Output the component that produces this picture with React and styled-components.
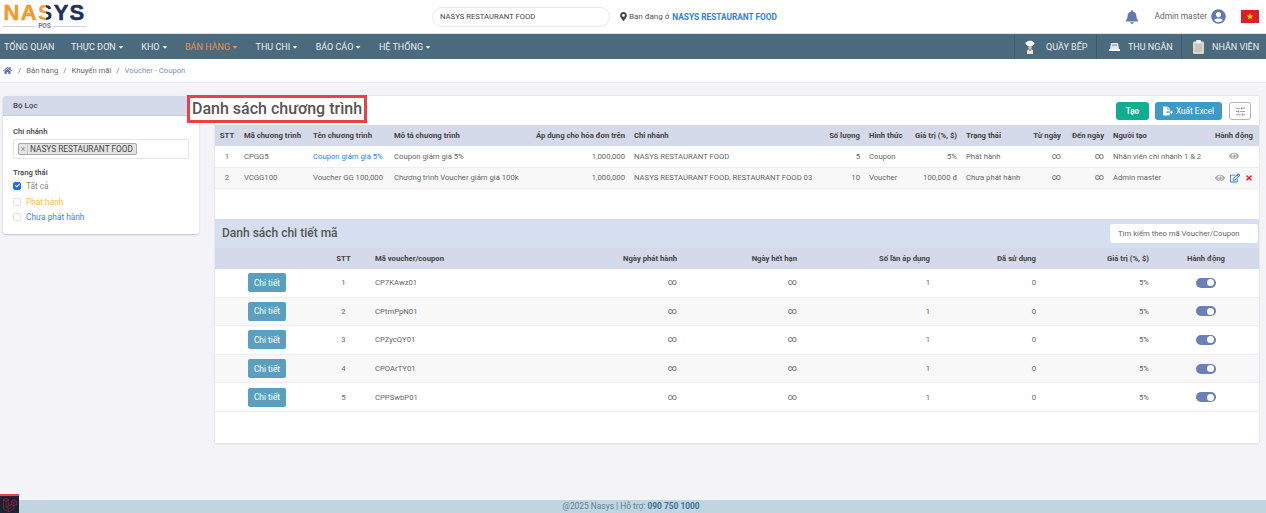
import React from 'react';
import styled, { createGlobalStyle } from 'styled-components';
import { FaHome, FaMapMarkerAlt, FaBell, FaUserCircle, FaFileExport, FaEye, FaRegEdit, FaTimes, FaLaravel, FaCheck, FaCaretDown } from 'react-icons/fa';
import { SlidersHorizontal } from 'lucide-react';

const GlobalStyle = createGlobalStyle`
    html, body {
        margin: 0;
        padding: 0;
        height: 100%;
        overflow: hidden;
        background: #f3f3f8;
        font-family: Roboto, "Liberation Sans", sans-serif;
        font-size: 7.7px;
        color: #555;
    }
    #root { height: 100%; }
    * { box-sizing: border-box; }
`;

const navItems = [
    { label: 'TỔNG QUAN' },
    { label: 'THỰC ĐƠN', caret: true },
    { label: 'KHO', caret: true },
    { label: 'BÁN HÀNG', caret: true, active: true },
    { label: 'THU CHI', caret: true },
    { label: 'BÁO CÁO', caret: true },
    { label: 'HỆ THỐNG', caret: true },
];

const programCols = [25, 69, 81, 140, 100, 195, 40, 46, 51, 58, 46, 43, 101, 49];
const programHead = [
    ['STT', 'center'],
    ['Mã chương trình'],
    ['Tên chương trình'],
    ['Mô tả chương trình'],
    ['Áp dụng cho hóa đơn trên', 'right'],
    ['Chi nhánh'],
    ['Số lượng', 'right'],
    ['Hình thức'],
    ['Giá trị (%, $)', 'right'],
    ['Trạng thái'],
    ['Từ ngày', 'right'],
    ['Đến ngày', 'right'],
    ['Người tạo'],
    ['Hành động', 'center'],
];

const programs = [
    {
        id: 1,
        code: 'CPGG5',
        name: 'Coupon giảm giá 5%',
        link: true,
        desc: 'Coupon giảm giá 5%',
        min: '1,000,000',
        branch: 'NASYS RESTAURANT FOOD',
        qty: 5,
        type: 'Coupon',
        value: '5%',
        status: 'Phát hành',
        by: 'Nhân viên chi nhánh 1 & 2',
    },
    {
        id: 2,
        code: 'VCGG100',
        name: 'Voucher GG 100,000',
        desc: 'Chương trình Voucher giảm giá 100k',
        min: '1,000,000',
        branch: 'NASYS RESTAURANT FOOD, RESTAURANT FOOD 03',
        qty: 10,
        type: 'Voucher',
        value: '100,000 đ',
        status: 'Chưa phát hành',
        by: 'Admin master',
        editable: true,
    },
];

const codeCols = [105, 47, 183, 135, 120, 133, 106, 113, 102];
const codeHead = [
    ['', 'center'],
    ['STT', 'center'],
    ['Mã voucher/coupon'],
    ['Ngày phát hành', 'right'],
    ['Ngày hết hạn', 'right'],
    ['Số lần áp dụng', 'right'],
    ['Đã sử dụng', 'right'],
    ['Giá trị (%, $)', 'right'],
    ['Hành động', 'center'],
];
const codes = ['CP7KAwz01', 'CPtmPpN01', 'CPZycQY01', 'CPOArTY01', 'CPPSwbP01'];

const ChefIcon = () => (
    <svg width="10" height="14" viewBox="0 0 10 14">
        <path d="M2 5C0 4.500 0 1.800 2 2 2.500 .3 7.500 .3 8 2c2-.2 2 2.500 0 3v1H2z" fill="#fff" />
        <circle cx="5" cy="7.500" r="1.800" fill="#e8c39e" />
        <path d="M2 14v-3c0-1 1-1.700 3-1.700s3 .7 3 1.700v3z" fill="#e9e4da" />
        <path d="M4 9.500h2L5 11z" fill="#a33" />
    </svg>
);

const CashierIcon = () => (
    <svg width="11" height="10" viewBox="0 0 11 10">
        <path d="M2 1h7l1 6H1z" fill="#dfe8ec" />
        <path d="M0 7h11v2H0z" fill="#fff" />
        <path d="M3 2.500h5v1.500H3z" fill="#8fb0bf" />
    </svg>
);

const ClipboardIcon = () => (
    <svg width="11" height="14" viewBox="0 0 11 14">
        <rect y="1.500" width="11" height="12.500" rx="1" fill="#d9d6cc" />
        <rect x="3" width="5" height="3" rx="1" fill="#f1efe8" />
        <path d="M2 5h7M2 7h7M2 9h7M2 11h7" stroke="#a9a79c" strokeWidth=".7" />
    </svg>
);

const FlagIcon = () => (
    <svg width="18" height="13" viewBox="0 0 18 13">
        <rect width="18" height="13" fill="#da1f26" />
        <path d="M9 3l.9 2.500h2.600l-2.100 1.600.8 2.500L9 8.100l-2.200 1.500.8-2.500-2.100-1.600h2.600z" fill="#ffdd00" />
    </svg>
);

const App = () => {
    return (
        <Page>
            <GlobalStyle />
            <TopBar>
                <Logo>
                    <LogoWord>
                        <LogoPart $color="#f39a2d">NA</LogoPart>
                        <LogoSplit>S</LogoSplit>
                        <LogoPart $color="#1f2f5c">YS</LogoPart>
                    </LogoWord>
                    <LogoSub>POS</LogoSub>
                </Logo>
                <BranchSelect>NASYS RESTAURANT FOOD</BranchSelect>
                <Location>
                    <FaMapMarkerAlt size={9} color="#444" />
                    Bạn đang ở <strong>NASYS RESTAURANT FOOD</strong>
                </Location>
                <UserArea>
                    <FaBell size={14} color="#6278b0" />
                    <UserName>Admin master</UserName>
                    <FaUserCircle size={15} color="#6278b0" />
                    <FlagBox>
                        <FlagIcon />
                    </FlagBox>
                </UserArea>
            </TopBar>

            <NavBar>
                <NavList>
                    {navItems.map((v) => (
                        <NavItem key={v.label} $active={v.active}>
                            {v.label}
                            {v.caret && <FaCaretDown size={8} />}
                        </NavItem>
                    ))}
                </NavList>
                <NavShortcuts>
                    <Shortcut $w={82} $pad={10} $gap={11}>
                        <ChefIcon />
                        QUẦY BẾP
                    </Shortcut>
                    <Shortcut $w={85} $pad={12} $gap={8}>
                        <CashierIcon />
                        THU NGÂN
                    </Shortcut>
                    <Shortcut $w={85} $pad={11} $gap={8}>
                        <ClipboardIcon />
                        NHÂN VIÊN
                    </Shortcut>
                </NavShortcuts>
            </NavBar>

            <Breadcrumb>
                <FaHome size={9} color="#5f76ad" />
                <span>/</span>
                <span>Bản hàng</span>
                <span>/</span>
                <span>Khuyến mãi</span>
                <span>/</span>
                <CrumbCurrent>Voucher - Coupon</CrumbCurrent>
            </Breadcrumb>

            <Content>
                <FilterCard>
                    <FilterHead>Bộ Lọc</FilterHead>
                    <FilterBody>
                        <FilterLabel>Chi nhánh</FilterLabel>
                        <TagBox>
                            <Tag>
                                <TagClose>×</TagClose>
                                NASYS RESTAURANT FOOD
                            </Tag>
                        </TagBox>
                        <FilterLabel $spaced>Trạng thái</FilterLabel>
                        <CheckRow>
                            <CheckBox $checked>
                                <FaCheck size={5} color="#fff" />
                            </CheckBox>
                            Tất cả
                        </CheckRow>
                        <CheckRow $color="#f5c242">
                            <CheckBox />
                            Phát hành
                        </CheckRow>
                        <CheckRow $color="#3b82f6">
                            <CheckBox />
                            Chưa phát hành
                        </CheckRow>
                    </FilterBody>
                </FilterCard>

                <MainCard>
                    <TitleRow>
                        <Title>Danh sách chương trình</Title>
                        <Actions>
                            <ActionButton $bg="#0fae91" $w={33}>
                                <b>Tạo</b>
                            </ActionButton>
                            <ActionButton $bg="#3f9bc6" $w={67}>
                                <FaFileExport size={10} />
                                Xuất Excel
                            </ActionButton>
                            <SettingsButton>
                                <SlidersHorizontal size={11} strokeWidth={1.5} />
                            </SettingsButton>
                        </Actions>
                    </TitleRow>

                    <DataTable>
                        <colgroup>
                            {programCols.map((w, i) => (
                                <Col key={i} $w={w} />
                            ))}
                        </colgroup>
                        <thead>
                            <tr>
                                {programHead.map(([label, align]) => (
                                    <Th key={label} $align={align} $h={21}>
                                        {label}
                                    </Th>
                                ))}
                            </tr>
                        </thead>
                        <tbody>
                            {programs.map((v) => (
                                <Row key={v.id} $h={21}>
                                    <Td $align="center">{v.id}</Td>
                                    <Td>{v.code}</Td>
                                    <Td $link={v.link}>{v.name}</Td>
                                    <Td>{v.desc}</Td>
                                    <Td $align="right">{v.min}</Td>
                                    <Td>{v.branch}</Td>
                                    <Td $align="right">{v.qty}</Td>
                                    <Td>{v.type}</Td>
                                    <Td $align="right">{v.value}</Td>
                                    <Td>{v.status}</Td>
                                    <Td $align="right"><InfinityMark>∞</InfinityMark></Td>
                                    <Td $align="right"><InfinityMark>∞</InfinityMark></Td>
                                    <Td>{v.by}</Td>
                                    <Td $align="center">
                                        <RowActions>
                                            <FaEye size={10} color="#a9a9a9" />
                                            {v.editable && <FaRegEdit size={10} color="#2f6fe0" />}
                                            {v.editable && <FaTimes size={8} color="#f01c2c" />}
                                        </RowActions>
                                    </Td>
                                </Row>
                            ))}
                        </tbody>
                    </DataTable>

                    <DetailHead>
                        <DetailTitle>Danh sách chi tiết mã</DetailTitle>
                        <SearchInput readOnly value="Tìm kiếm theo mã Voucher/Coupon" />
                    </DetailHead>

                    <DataTable>
                        <colgroup>
                            {codeCols.map((w, i) => (
                                <Col key={i} $w={w} />
                            ))}
                        </colgroup>
                        <thead>
                            <tr>
                                {codeHead.map(([label, align]) => (
                                    <Th key={label} $align={align} $h={21} $wide>
                                        {label}
                                    </Th>
                                ))}
                            </tr>
                        </thead>
                        <tbody>
                            {codes.map((code, i) => (
                                <Row key={code} $h={28.6}>
                                    <Td $align="center" $wide>
                                        <DetailButton>Chi tiết</DetailButton>
                                    </Td>
                                    <Td $align="center" $wide>{i + 1}</Td>
                                    <Td $wide>{code}</Td>
                                    <Td $align="right" $wide><InfinityMark>∞</InfinityMark></Td>
                                    <Td $align="right" $wide><InfinityMark>∞</InfinityMark></Td>
                                    <Td $align="right" $wide>1</Td>
                                    <Td $align="right" $wide>0</Td>
                                    <Td $align="right" $wide>5%</Td>
                                    <Td $align="center" $wide>
                                        <Toggle />
                                    </Td>
                                </Row>
                            ))}
                        </tbody>
                    </DataTable>
                </MainCard>
            </Content>

            <Footer>
                @2025 Nasys | Hỗ trợ: <strong>090 750 1000</strong>
            </Footer>
            <DebugBadge>
                <FaLaravel size={14} color="#c0202c" />
            </DebugBadge>
        </Page>
    );
};

const Page = styled.div`
    position: relative;
    height: 100%;
    display: flex;
    flex-direction: column;
`;

const TopBar = styled.div`
    height: 33px;
    flex: none;
    background: #fff;
    display: grid;
    grid-template-columns: 432px 187px 1fr auto;
    align-items: center;
    padding-right: 7px;
`;

const Logo = styled.div`
    width: 86px;
    margin-top: -2px;
    padding-left: 3px;
    text-align: center;
`;

const LogoWord = styled.div`
    font-family: "Liberation Sans", sans-serif;
    font-size: 22px;
    font-weight: 700;
    line-height: 21px;
    letter-spacing: 1.2px;
    white-space: nowrap;
`;

const LogoPart = styled.span`
    color: ${(props) => props.$color};
    -webkit-text-stroke: 0.5px ${(props) => props.$color};
`;

const LogoSplit = styled.span`
    background: linear-gradient(90deg, #f39a2d 50%, #1f2f5c 50%);
    -webkit-background-clip: text;
    background-clip: text;
    color: transparent;
`;

const LogoSub = styled.div`
    display: flex;
    align-items: center;
    gap: 3px;
    font-size: 6.5px;
    font-weight: 700;
    color: #5f76ad;
    line-height: 7px;
    &::before,
    &::after {
        content: '';
        flex: 1;
        height: 1px;
        background: #c9cfe0;
    }
`;

const BranchSelect = styled.div`
    width: 178px;
    height: 20px;
    line-height: 18px;
    padding-left: 7px;
    border: 1px solid #e8e8ea;
    border-radius: 10px;
    color: #444;
`;

const Location = styled.div`
    display: flex;
    align-items: center;
    gap: 1px;
    white-space: pre;
    color: #555;
    font-size: 8px;
    strong {
        color: #2d7ff0;
        font-weight: 700;
        font-size: 8.3px;
    }
`;

const UserArea = styled.div`
    display: flex;
    align-items: center;
`;

const UserName = styled.span`
    margin: 0 4px 2px 15px;
    color: #666;
    font-size: 8.4px;
`;

const FlagBox = styled.span`
    display: flex;
    margin-left: 15px;
`;

const NavBar = styled.div`
    height: 26px;
    flex: none;
    background: #4a6a7e;
    border-top: 1px solid #dfe4e8;
    display: flex;
    justify-content: space-between;
    color: #e8edf0;
    font-size: 9px;
`;

const NavList = styled.div`
    display: flex;
    align-items: center;
    gap: 16.5px;
    padding-left: 4px;
`;

const NavItem = styled.div`
    display: flex;
    align-items: center;
    gap: 1px;
    white-space: nowrap;
    color: ${(props) => (props.$active ? '#e8914a' : '#e8edf0')};
`;

const NavShortcuts = styled.div`
    display: flex;
`;

const Shortcut = styled.div`
    width: ${(props) => props.$w}px;
    display: flex;
    align-items: center;
    gap: ${(props) => props.$gap}px;
    padding-left: ${(props) => props.$pad}px;
    border-left: 1px solid #3f5b6d;
    white-space: nowrap;
`;

const Breadcrumb = styled.div`
    height: 24px;
    flex: none;
    background: #fff;
    border-bottom: 1px solid #e9e9ee;
    display: flex;
    align-items: center;
    gap: 5px;
    padding-left: 3px;
    color: #666;
    svg {
        margin-right: 1px;
    }
`;

const CrumbCurrent = styled.span`
    color: #7c8fbf;
`;

const Content = styled.div`
    flex: 1;
    min-height: 0;
    display: flex;
    align-items: flex-start;
    gap: 16px;
    padding: 13px 7px 0 3px;
`;

const FilterCard = styled.div`
    width: 196px;
    flex: none;
    background: #fff;
    border-radius: 3px;
    box-shadow: 0 1px 2px rgba(0, 0, 0, 0.2);
    overflow: hidden;
`;

const FilterHead = styled.div`
    height: 20px;
    line-height: 19px;
    padding-left: 10px;
    background: #d4daea;
    border-bottom: 1px solid #c5cce0;
    font-size: 8px;
    font-weight: 500;
    color: #444;
`;

const FilterBody = styled.div`
    padding: 10px 10px 9px;
`;

const FilterLabel = styled.div`
    height: 11px;
    line-height: 11px;
    font-weight: 500;
    color: #444;
    margin-top: ${(props) => (props.$spaced ? '8px' : '0')};
`;

const TagBox = styled.div`
    height: 20px;
    margin-top: 2px;
    padding: 3px 0 0 4px;
    border: 1px solid #e4e4e8;
    border-radius: 2px;
`;

const Tag = styled.span`
    display: inline-flex;
    align-items: center;
    height: 12px;
    padding-right: 3px;
    background: #e4e4e4;
    border: 1px solid #a8a8a8;
    border-radius: 2px;
    color: #444;
    font-size: 8.3px;
    white-space: nowrap;
`;

const TagClose = styled.span`
    width: 9px;
    margin-right: 2px;
    text-align: center;
    color: #888;
    border-right: 1px solid #c8c8c8;
`;

const CheckRow = styled.div`
    height: 15.7px;
    display: flex;
    align-items: center;
    gap: 5px;
    font-size: 8.3px;
    color: ${(props) => props.$color || '#888'};
`;

const CheckBox = styled.span`
    width: 8px;
    height: 8px;
    flex: none;
    display: flex;
    align-items: center;
    justify-content: center;
    border-radius: 2px;
    background: ${(props) => (props.$checked ? '#1a6ff0' : '#fff')};
    border: 1px solid ${(props) => (props.$checked ? '#1a6ff0' : '#e2e2e6')};
`;

const MainCard = styled.div`
    width: 1044px;
    height: 348px;
    flex: none;
    background: #fff;
    border-bottom: 1px solid #e5e5e8;
    box-shadow: 0 0 2px rgba(0, 0, 0, 0.12);
`;

const TitleRow = styled.div`
    height: 29px;
    display: flex;
    justify-content: space-between;
    align-items: flex-start;
`;

const Title = styled.h1`
    width: 180px;
    height: 28px;
    margin: -1px 0 0 -28px;
    padding-left: 2px;
    border: 3px solid #ef3f46;
    background: #fff;
    font-size: 16px;
    font-weight: 500;
    line-height: 22px;
    color: #555;
    white-space: nowrap;
`;

const Actions = styled.div`
    display: flex;
    gap: 6px;
    padding: 6px 8px 0 0;
`;

const ActionButton = styled.button`
    width: ${(props) => props.$w}px;
    height: 18px;
    padding: 0;
    display: flex;
    align-items: center;
    justify-content: center;
    gap: 3px;
    border: none;
    border-radius: 3px;
    background: ${(props) => props.$bg};
    color: #fff;
    font: inherit;
    font-size: 8.2px;
`;

const SettingsButton = styled.button`
    width: 22px;
    height: 18px;
    margin-left: 1px;
    padding: 0;
    display: flex;
    align-items: center;
    justify-content: center;
    border: 1px solid #b4b4b4;
    border-radius: 3px;
    background: #fff;
    color: #777;
`;

const DataTable = styled.table`
    width: 100%;
    table-layout: fixed;
    border-collapse: collapse;
`;

const Col = styled.col`
    width: ${(props) => props.$w}px;
`;

const Th = styled.th`
    height: ${(props) => props.$h}px;
    padding: ${(props) => (props.$wide ? '0 8px' : '0 5px 0 4px')};
    background: #d4daea;
    text-align: ${(props) => props.$align || 'left'};
    font-weight: 700;
    color: #444;
    white-space: nowrap;
    &:last-child {
        padding-right: ${(props) => (props.$wide ? '12px' : '5px')};
    }
`;

const Row = styled.tr`
    height: ${(props) => props.$h}px;
    border-bottom: 1px solid #eee;
    &:nth-child(even) {
        background: #f8f8f8;
    }
`;

const Td = styled.td`
    padding: ${(props) => (props.$wide ? '0 8px' : '0 5px 0 4px')};
    text-align: ${(props) => props.$align || 'left'};
    color: ${(props) => (props.$link ? '#2d7ff0' : '#666')};
    white-space: nowrap;
    overflow: hidden;
    &:last-child {
        padding-right: ${(props) => (props.$wide ? '12px' : '5px')};
    }
`;

const InfinityMark = styled.span`
    font-size: 9px;
    line-height: 8px;
    color: #666;
`;

const RowActions = styled.div`
    display: flex;
    align-items: center;
    justify-content: center;
    gap: 5px;
`;

const DetailHead = styled.div`
    height: 29px;
    margin-top: 30px;
    display: flex;
    justify-content: space-between;
    align-items: center;
    padding: 0 1px 0 7px;
    background: #d5dff0;
`;

const DetailTitle = styled.div`
    font-size: 12px;
    font-weight: 500;
    color: #555;
`;

const SearchInput = styled.input`
    width: 148px;
    height: 19px;
    padding: 0 8px;
    border: none;
    border-radius: 3px;
    background: #fff;
    color: #666;
    font: inherit;
    outline: none;
`;

const DetailButton = styled.button`
    width: 38px;
    height: 19px;
    margin-left: -1px;
    padding: 0;
    border: none;
    border-radius: 2px;
    background: #5a9fc0;
    color: #fff;
    font: inherit;
    font-size: 8.4px;
    vertical-align: middle;
`;

const Toggle = styled.span`
    display: inline-block;
    position: relative;
    width: 20px;
    height: 10px;
    border-radius: 5px;
    background: #6b80b8;
    vertical-align: middle;
    &::after {
        content: '';
        position: absolute;
        top: 1.5px;
        right: 2px;
        width: 7px;
        height: 7px;
        border-radius: 50%;
        background: #fff;
    }
`;

const Footer = styled.div`
    height: 13px;
    flex: none;
    padding-right: 4px;
    background: #c1d5e1;
    text-align: center;
    line-height: 13px;
    font-size: 8.4px;
    color: #5d8299;
    strong {
        color: #3c7299;
    }
`;

const DebugBadge = styled.div`
    position: absolute;
    left: 0;
    bottom: 0;
    width: 19px;
    height: 19px;
    display: flex;
    align-items: center;
    justify-content: center;
    background: #1a2233;
    border-top: 2px solid #f04050;
`;

export default App;
